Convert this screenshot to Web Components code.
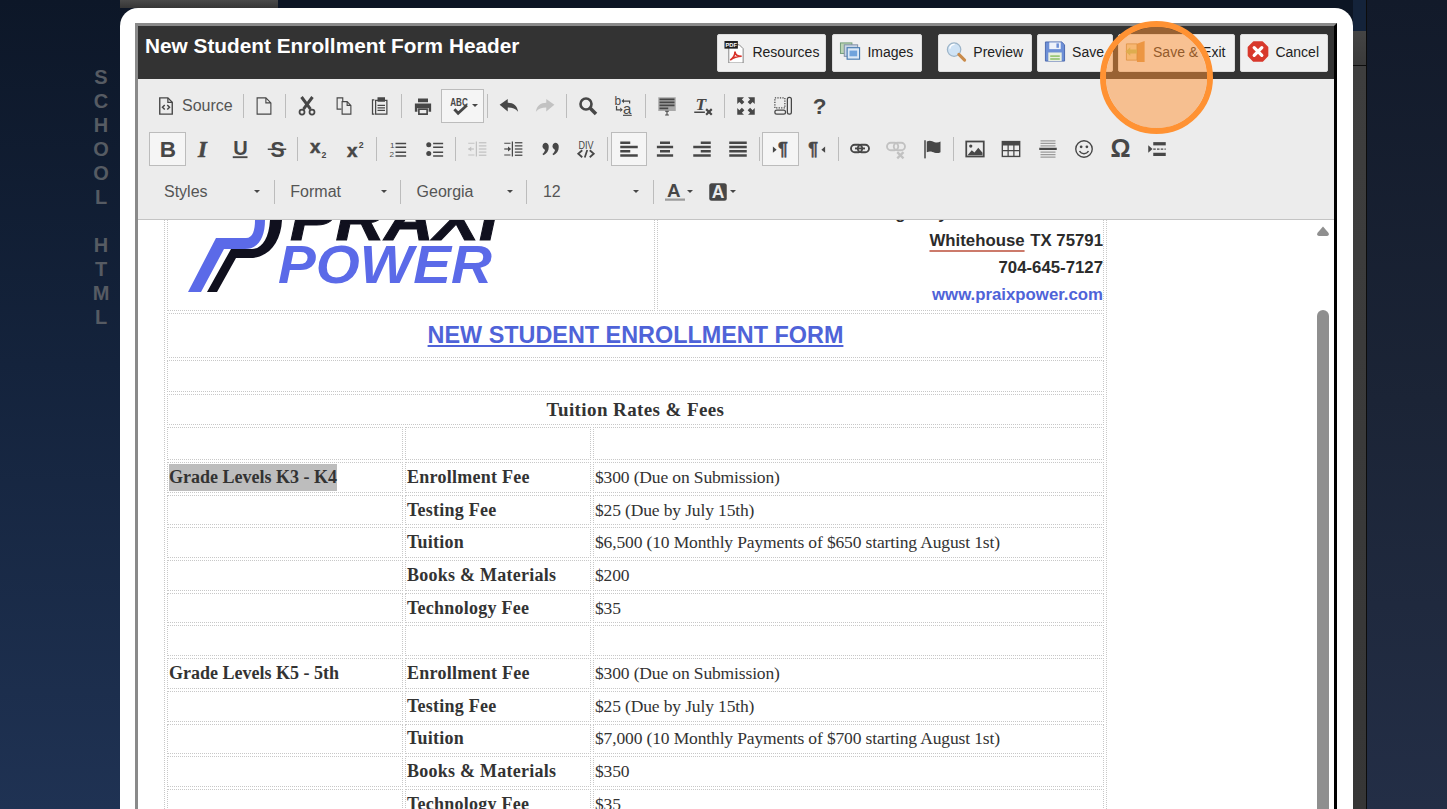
<!DOCTYPE html>
<html>
<head>
<meta charset="utf-8">
<title>New Student Enrollment Form Header</title>
<style>
    html, body { margin: 0; height: 100%; overflow: hidden; background: #141c2e; }
</style>
</head>
<body>
<page-backdrop rail="SCHOOL HTML"></page-backdrop>
<editor-modal>
    <editor-header title="New Student Enrollment Form Header">
        <action-button icon="pdf" style="margin-right:1px;padding-right:6px">Resources</action-button>
        <action-button icon="images">Images</action-button>
        <action-button icon="preview" style="margin-left:11px">Preview</action-button>
        <action-button icon="save">Save</action-button>
        <action-button icon="exit" style="padding-right:9px">Save &amp; Exit</action-button>
        <action-button icon="cancel">Cancel</action-button>
    </editor-header>
    <cke-toolbar>
        <tool-row loose>
            <tool-button icon="source" label="Source"></tool-button><tool-sep></tool-sep>
            <tool-button icon="newpage"></tool-button><tool-sep></tool-sep>
            <tool-button icon="cut"></tool-button><tool-button icon="copy"></tool-button><tool-button icon="paste"></tool-button><tool-sep></tool-sep>
            <tool-button icon="print"></tool-button><tool-button icon="spell" arrow active></tool-button><tool-sep></tool-sep>
            <tool-button icon="undo"></tool-button><tool-button icon="redo"></tool-button><tool-sep></tool-sep>
            <tool-button icon="find"></tool-button><tool-button icon="replace"></tool-button><tool-sep></tool-sep>
            <tool-button icon="selectall"></tool-button><tool-button icon="clear"></tool-button><tool-sep></tool-sep>
            <tool-button icon="maximize"></tool-button><tool-button icon="blocks"></tool-button><tool-button icon="help"></tool-button>
        </tool-row>
        <tool-row>
            <tool-button icon="bold" active></tool-button><tool-button icon="italic"></tool-button><tool-button icon="underline"></tool-button><tool-button icon="strike"></tool-button><tool-sep></tool-sep>
            <tool-button icon="sub"></tool-button><tool-button icon="sup"></tool-button><tool-sep></tool-sep>
            <tool-button icon="ol"></tool-button><tool-button icon="ul"></tool-button><tool-sep></tool-sep>
            <tool-button icon="outdent"></tool-button><tool-button icon="indent"></tool-button><tool-button icon="quote"></tool-button><tool-button icon="div"></tool-button><tool-sep></tool-sep>
            <tool-button icon="left" active></tool-button><tool-button icon="center"></tool-button><tool-button icon="right"></tool-button><tool-button icon="justify"></tool-button><tool-sep></tool-sep>
            <tool-button icon="ltr" active></tool-button><tool-button icon="rtl"></tool-button><tool-sep></tool-sep>
            <tool-button icon="link"></tool-button><tool-button icon="unlink"></tool-button><tool-button icon="flag"></tool-button><tool-sep></tool-sep>
            <tool-button icon="image"></tool-button><tool-button icon="table"></tool-button><tool-button icon="hr"></tool-button><tool-button icon="smiley"></tool-button><tool-button icon="omega"></tool-button><tool-button icon="pagebreak"></tool-button>
        </tool-row>
        <tool-row combos>
            <tool-combo>Styles</tool-combo><tool-sep flush></tool-sep>
            <tool-combo>Format</tool-combo><tool-sep flush></tool-sep>
            <tool-combo>Georgia</tool-combo><tool-sep flush></tool-sep>
            <tool-combo>12</tool-combo><tool-sep flush></tool-sep>
            <tool-button icon="textcolor" arrow style="margin-left:3.5px"></tool-button><tool-button icon="bgcolor" arrow></tool-button>
        </tool-row>
    </cke-toolbar>
    <doc-sheet></doc-sheet>
</editor-modal>
<cue-ring></cue-ring>

<script>
// Toolbar glyphs, drawn on a 16 unit grid
const line = (d, w = 1) => `<path d="${d}" fill="none" stroke="currentColor" stroke-width="${w}"/>`;
const fill = (d) => `<path d="${d}" fill="currentColor"/>`;
const label = (x, y, size, text, extra = '') =>
    `<text x="${x}" y="${y}" font-size="${size}" ${extra} font-family="'Liberation Sans',sans-serif" font-weight="700" fill="currentColor">${text}</text>`;
const bars = (rows) => rows.map(([x, y, w, h = 1.6]) => `<rect x="${x}" y="${y}" width="${w}" height="${h}" fill="currentColor"/>`).join('');
const heavy = 'stroke="currentColor" stroke-width=".4"';

const TOOL_ICONS = {
    source: line('M3 1.5h6.5L13 5v9.5H3z', 1.1) + line('M9.5 1.5V5H13', 1) + line('M7 7.2L5.2 9 7 10.8M9 7.2l1.8 1.8L9 10.8', 1.2),
    newpage: line('M2.5 1.5h7l4 4v9h-11zM9.5 1.5v4h4', .9),
    cut: line('M5.2 10.5L12.4 .8M10.8 10.5L3.6 .8', 2.4) + '<circle cx="4" cy="12.8" r="2" fill="none" stroke="currentColor" stroke-width="1.4"/><circle cx="12" cy="12.8" r="2" fill="none" stroke="currentColor" stroke-width="1.4"/>',
    copy: line('M6 10.5H2.5v-9H7v3', .9) + line('M6.5 4.5H10.5l3 3v7h-7zM10.5 4.5v3h3', .9),
    paste: line('M3.5 3H2v11.5h1.5', 1) + line('M4.5 3.5h9v11h-9z', 1) + fill('M6 1h6v3.6H6z') + bars([[6, 7, 6, 1], [6, 9, 6, 1], [6, 11, 6, 1]]),
    print: fill('M4 2h8v3H4zM1.5 6h13v6.5H12.5V9.5h-9v3H1.5z') + line('M4.7 10.5h6.6v4H4.7z', 1.3),
    spell: label(.2, 7.6, 8.4, 'ABC', 'textLength="14" lengthAdjust="spacingAndGlyphs"') + line('M3.5 10.6l3 3.2 7-6.4', 2.3),
    undo: fill('M.5 7L7 2.3v3c4.5 0 7.6 2.4 8.3 7.2-2-2.5-4.6-3.4-8.3-3.4v3.2z'),
    redo: fill('M15.5 7L9 2.3v3c-4.5 0-7.6 2.4-8.3 7.2 2-2.5 4.6-3.4 8.3-3.4v3.2z'),
    find: '<circle cx="6.4" cy="6.4" r="4.4" fill="none" stroke="currentColor" stroke-width="2.1"/>' + line('M9.8 9.8l4.6 4.6', 2.8),
    replace: label(.4, 7.4, 9.5, 'b', 'style="font-weight:400"') + label(7.2, 14.4, 12, 'a', 'style="font-weight:400"') + line('M8 4h4.5V6', 1) + fill('M8 2.2v3.6L6 4z') + line('M2 8v3h3', 1) + fill('M5 9.2v3.6L7 11z') + bars([[7.2, 15, 7, .9]]),
    selectall: '<rect x="1" y="1" width="14" height="11" fill="#a8a8a8"/>' + bars([[2, 2, 12, 1.4], [2, 4.4, 12, 1.4], [2, 6.8, 12, 1.4], [2, 9.2, 7, 1.4]]) + line('M6.5 12.2h3M8 12.2v3M6.5 15.2h3', .9),
    clear: `<text x="2" y="11" font-size="14" font-family="'Liberation Serif',serif" font-weight="700" font-style="italic" fill="currentColor">T</text>` + bars([[1, 12.4, 8.5, 1.2]]) + line('M10.5 10.5l4.5 4.5M15 10.5l-4.5 4.5', 1.7),
    maximize: fill('M1 1h5.4L4.7 2.7l2 2-2 2-2-2L1 6.4zM15 1v5.4l-1.7-1.7-2 2-2-2 2-2L9.6 1zM1 15V9.6l1.7 1.7 2-2 2 2-2 2L6.4 15zM15 15H9.6l1.7-1.7-2-2 2-2 2 2L15 9.6z'),
    blocks: '<path d="M1.5 1.5h8v8h-8z" fill="none" stroke="currentColor" stroke-width="1" stroke-dasharray="1 1"/><rect x="1.5" y="11.3" width="8.5" height="3.2" rx="1.5" fill="none" stroke="currentColor"/><rect x="11.5" y="1" width="3.2" height="13.5" rx="1.5" fill="none" stroke="currentColor"/>',
    help: label(3, 14.6, 18, '?'),
    bold: label(2.2, 14, 18, 'B'),
    italic: `<text x="3.2" y="14" font-size="18" font-family="'Liberation Serif',serif" font-weight="700" font-style="italic" fill="currentColor" stroke="currentColor" stroke-width=".5">I</text>`,
    underline: label(2.6, 12.4, 16, 'U') + bars([[2.2, 13.8, 11.8, 1.5]]),
    strike: label(2.8, 14, 17, 'S') + bars([[.6, 7.6, 14.8, 1.2]]),
    sub: label(.8, 11.4, 15, 'x', heavy) + label(10, 14.8, 7, '2'),
    sup: label(.8, 14, 15, 'x', heavy) + label(10.2, 7, 7, '2'),
    ol: label(1.6, 7, 6.5, '1', 'style="font-weight:400"') + label(1.2, 14, 6.5, '2', 'style="font-weight:400"') + bars([[6, 3, 8.5, 1.2], [6, 6, 8.5, 1.2], [6, 10, 8.5, 1.2], [6, 13, 8.5, 1.2]]),
    ul: '<circle cx="3" cy="4.6" r="2" fill="currentColor"/><circle cx="3" cy="11.6" r="2" fill="currentColor"/>' + bars([[6.5, 3, 8, 1.2], [6.5, 6, 8, 1.2], [6.5, 10, 8, 1.2], [6.5, 13, 8, 1.2]]),
    outdent: bars([[7, 2, 1, 12], [9.5, 2.5, 6, 1], [9.5, 5, 6, 1], [9.5, 7.5, 6, 1], [9.5, 10, 6, 1], [9.5, 12.5, 6, 1]]) + line('M1 8H5.5', 1) + fill('M1 8l2.4-2v4zM1 3h5v.8H1zM1 12.3h5v.8H1z'),
    indent: bars([[7, 2, 1, 12], [9.5, 2.5, 6, 1], [9.5, 5, 6, 1], [9.5, 7.5, 6, 1], [9.5, 10, 6, 1], [9.5, 12.5, 6, 1]]) + line('M1 8H5', 1) + fill('M6.5 8L4 6v4zM1 3h5v.8H1zM1 12.3h5v.8H1z'),
    quote: fill('M4 3a3.2 3.2 0 0 1 3 3.3c0 3-1.6 5.2-4.2 6.7l-.9-1c1.2-1 2-2.2 2.1-3.3A3 3 0 0 1 4 3zM12 3a3.2 3.2 0 0 1 3 3.3c0 3-1.6 5.2-4.2 6.7l-.9-1c1.2-1 2-2.2 2.1-3.3A3 3 0 0 1 12 3z'),
    div: label(2, 7.6, 8.6, 'DIV', 'style="font-weight:400" textLength="12" lengthAdjust="spacingAndGlyphs"') + line('M5 9l-3.2 2.8L5 14.6M11 9l3.2 2.8L11 14.6M9 8.8l-2 6', 1.4),
    left: bars([[1, 2, 8, 2], [1, 5.4, 14, 2], [1, 8.8, 8, 2], [1, 12.2, 14, 2]]),
    center: bars([[4, 2, 8, 2], [1.5, 5.4, 13, 2], [4, 8.8, 8, 2], [1.5, 12.2, 13, 2]]),
    right: bars([[7, 2, 8, 2], [1, 5.4, 14, 2], [7, 8.8, 8, 2], [1, 12.2, 14, 2]]),
    justify: bars([[1, 2, 14, 2], [1, 5.4, 14, 2], [1, 8.8, 14, 2], [1, 12.2, 14, 2]]),
    ltr: fill('M1.5 6l3 2.5-3 2.5z') + label(5.5, 13, 14, '¶', heavy),
    rtl: label(1, 13, 14, '¶', heavy) + fill('M14.5 6l-3 2.5 3 2.5z'),
    link: '<rect x=".8" y="4.6" width="9" height="6" rx="3" fill="none" stroke="currentColor" stroke-width="1.5"/><rect x="6.2" y="4.6" width="9" height="6" rx="3" fill="none" stroke="currentColor" stroke-width="1.5"/>' + bars([[4, 6.8, 8, 1.5]]),
    unlink: '<rect x=".8" y="3" width="9" height="6" rx="3" fill="none" stroke="currentColor" stroke-width="1.5"/><rect x="6.2" y="3" width="9" height="6" rx="3" fill="none" stroke="currentColor" stroke-width="1.5"/>' + line('M9 10.5l5 5M14 10.5l-5 5', 1.8),
    flag: bars([[1, 1, 1.2, 14.5]]) + fill('M3 2c3-1.2 4.4 0 6.3.5 2 .4 3.2.2 4.7-.5v8.6c-1.6.8-3 .8-4.7.4-1.8-.6-3.5-1.5-6.3-.4z'),
    image: '<rect x="1" y="2" width="14" height="12" fill="none" stroke="currentColor" stroke-width="1.4"/><circle cx="4.6" cy="5.6" r="1.3" fill="currentColor"/>' + fill('M2 13l3.4-4 2.2 1.8L10.6 7 14 11v2z'),
    table: fill('M.5 1.5h15v13H.5z') + '<g fill="#ececec"><rect x="1.6" y="5.2" width="3.6" height="3.6"/><rect x="6.2" y="5.2" width="3.6" height="3.6"/><rect x="10.8" y="5.2" width="3.6" height="3.6"/><rect x="1.6" y="9.8" width="3.6" height="3.6"/><rect x="6.2" y="9.8" width="3.6" height="3.6"/><rect x="10.8" y="9.8" width="3.6" height="3.6"/></g>',
    hr: '<g fill="#9a9a9a"><rect x="2" y="1" width="12" height="1"/><rect x="2" y="3" width="12" height="1"/><rect x="2" y="5" width="12" height="1"/><rect x="2" y="10" width="12" height="1"/><rect x="2" y="12" width="12" height="1"/><rect x="2" y="14" width="12" height="1"/></g>' + bars([[1, 7, 14, 1.8]]),
    smiley: '<circle cx="8" cy="8" r="6.6" fill="none" stroke="currentColor" stroke-width="1.1"/><circle cx="5.7" cy="6.2" r="1.1" fill="currentColor"/><circle cx="10.3" cy="6.2" r="1.1" fill="currentColor"/>' + line('M4.4 9.6c1.6 2.8 5.6 2.8 7.2 0', 1.2),
    omega: label(-.4, 14.6, 20, 'Ω'),
    pagebreak: fill('M1 5l3.4 3L1 11z') + bars([[5, 2.5, 10, 2.6], [5, 11, 10, 2.6]]) + '<path d="M5 8h10" stroke="currentColor" stroke-width="1" stroke-dasharray="2 1"/>',
    textcolor: label(1.5, 11.6, 15, 'A') + '<rect x="0" y="13.2" width="16" height="1.8" fill="#9c9c9c"/>',
    bgcolor: '<rect x="1" y="1" width="14" height="14" rx="2" fill="currentColor"/>' + `<text x="3" y="13" font-size="14" font-family="'Liberation Sans',sans-serif" font-weight="700" fill="#ececec">A</text>`
};

// The coloured icons of the dark header bar, on a 22 unit grid
const ACTION_ICONS = {
    pdf: `<path d="M4.5 4h11l4 4v15h-15z" fill="#fff" stroke="#666" stroke-width=".8"/><rect x="0" y="0" width="14" height="8" fill="#222"/><text x="1" y="6.4" font-size="6.4" font-weight="700" font-family="'Liberation Sans',sans-serif" fill="#fff" textLength="12" lengthAdjust="spacingAndGlyphs">PDF</text><path d="M6 20c3-2 5-6 5-9 0 3 2 5 7 5-4 0-8 1-12 4z" fill="none" stroke="#d8322a" stroke-width="1.7"/>`,
    images: `<rect x="1" y="2" width="12" height="11" fill="#bcd4b4" stroke="#6f9a78"/><rect x="5" y="4" width="14" height="12" fill="#c9d6e6" stroke="#7f8ea6"/><rect x="8" y="7" width="13" height="12" fill="#dce9f6" stroke="#4a7cb0" stroke-width="1.2"/><rect x="10.5" y="10" width="8" height="6" fill="#6fa3dc"/>`,
    preview: `<circle cx="9" cy="9" r="7" fill="#cfe3f5" stroke="#9cb4c8" stroke-width="1.3"/><path d="M4.5 8a5 5 0 0 1 5-4.4" fill="none" stroke="#fff" stroke-width="1.4"/><path d="M14 14l6 6" stroke="#c98b4a" stroke-width="3.2" stroke-linecap="round"/>`,
    save: `<path d="M1 1h17l3 3v17H1z" fill="#6d8fd6" stroke="#4a68ad"/><rect x="5" y="1.5" width="12" height="7" fill="#eef2fa"/><rect x="12.5" y="2.5" width="2.6" height="4.6" fill="#6d8fd6"/><rect x="4" y="12" width="14" height="9" fill="#e8f0e0"/><rect x="6" y="15" width="10" height="1.6" fill="#8ec06a"/><rect x="6" y="18" width="10" height="1.6" fill="#8ec06a"/>`,
    exit: `<path d="M12 3l8-3v22h-8z" fill="#d89a50"/><path d="M12 3H1v17h11z" fill="#efdcae" stroke="#b98c4a" stroke-width=".8"/><path d="M0 11l5-4.5V9h7v4H5v2.5z" fill="#bcc968"/>`,
    cancel: `<path d="M6.5 1h9L21 6.5v9L15.5 21h-9L1 15.5v-9z" fill="#d8392c" stroke-linejoin="round" stroke="#d8392c" stroke-width="1.6"/><path d="M7 7l8 8M15 7l-8 8" stroke="#fff" stroke-width="3.4" stroke-linecap="round"/>`
};

class PageBackdrop extends HTMLElement {
    connectedCallback() {
        const letters = this.getAttribute('rail').split('');
        this.attachShadow({ mode: 'open' }).innerHTML = `
            <style>
                :host {
                    display: grid;
                    grid-template-columns: 120px 158px 1075px 14px 1fr;
                    height: 809px;
                    background: #0d1626;
                }
                .rail {
                    background: linear-gradient(to bottom, #0d1728 0%, #14233c 45%, #1f3253 100%);
                    padding: 65px 0 0 91px;
                    font: 700 20px/24px "Liberation Sans", sans-serif;
                    color: #565b63;
                }
                .rail div { width: 20px; height: 24px; text-align: center; }
                .tab { height: 8px; background: linear-gradient(to bottom, #4a4a4a, #363636); }
                .mid { background: #0c1524; }
                .edge {
                    box-sizing: border-box;
                    border-right: 1px solid #0c0c0c;
                    background: linear-gradient(to bottom, #14233a 0, #14233a 31px, #444 31px, #3a3a3a 65px, #0e0e0e 65px, #0e0e0e 66px, #3e3e3e 66px, #363636 100%);
                }
                .far { background: linear-gradient(to bottom, #121a2a 0, #1b2436 400px, #232e46 100%); }
            </style>
            <div class="rail">${letters.map(c => `<div>${c === ' ' ? '' : c}</div>`).join('')}</div>
            <div class="tab"></div>
            <div class="mid"></div>
            <div class="edge"></div>
            <div class="far"></div>
        `;
    }
}

class EditorModal extends HTMLElement {
    connectedCallback() {
        this.attachShadow({ mode: 'open' }).innerHTML = `
            <style>
                :host {
                    display: block;
                    position: absolute;
                    left: 120px;
                    top: 8px;
                    width: 1233px;
                    height: 860px;
                    box-sizing: border-box;
                    padding: 15px 16px 0 15px;
                    background: #fff;
                    border-radius: 18px 18px 0 0;
                }
                .frame {
                    display: flex;
                    flex-direction: column;
                    height: 100%;
                    box-sizing: border-box;
                    border: 3px solid #8a8a8a;
                    border-right-color: #000;
                    border-bottom: 0;
                }
            </style>
            <div class="frame"><slot></slot></div>
        `;
    }
}

class EditorHeader extends HTMLElement {
    connectedCallback() {
        this.attachShadow({ mode: 'open' }).innerHTML = `
            <style>
                :host {
                    display: flex;
                    justify-content: space-between;
                    flex: 0 0 53px;
                    background: #333;
                    padding: 0 6px 0 7px;
                }
                h1 {
                    margin: 8px 0 0;
                    font: 700 20.8px/24px "Liberation Sans", sans-serif;
                    color: #fff;
                }
                .actions { display: flex; gap: 5px; padding-top: 8px; align-items: flex-start; }
            </style>
            <h1>${this.getAttribute('title')}</h1>
            <div class="actions"><slot></slot></div>
        `;
        this.removeAttribute('title');
    }
}

class ActionButton extends HTMLElement {
    connectedCallback() {
        this.attachShadow({ mode: 'open' }).innerHTML = `
            <style>
                :host {
                    display: flex;
                    align-items: center;
                    gap: 6px;
                    height: 38px;
                    box-sizing: border-box;
                    padding: 0 8px 2px 6px;
                    background: #f0f0f0;
                    border: 1px solid #dcdcdc;
                    border-radius: 2px;
                    font: 14px "Liberation Sans", sans-serif;
                    color: #222;
                }
                svg { width: 22px; height: 22px; flex: none; }
            </style>
            <svg viewBox="0 0 22 23">${ACTION_ICONS[this.getAttribute('icon')]}</svg>
            <slot></slot>
        `;
    }
}

class CkeToolbar extends HTMLElement {
    connectedCallback() {
        this.attachShadow({ mode: 'open' }).innerHTML = `
            <style>
                :host {
                    display: flex;
                    flex-direction: column;
                    gap: 9.4px;
                    flex: 0 0 141px;
                    box-sizing: border-box;
                    padding: 10px 0 0 11px;
                    background: #ececec;
                    border-bottom: 1px solid #c4c4c4;
                }
            </style>
            <slot></slot>
        `;
    }
}

class ToolRow extends HTMLElement {
    connectedCallback() {
        this.attachShadow({ mode: 'open' }).innerHTML = `
            <style>
                :host { display: flex; align-items: center; height: 33.6px; }
                :host([combos]) { margin-left: -.5px; }
                :host([loose]) ::slotted(tool-sep) { margin: 0 2.6px; }
            </style>
            <slot></slot>
        `;
    }
}

class ToolButton extends HTMLElement {
    connectedCallback() {
        const name = this.getAttribute('icon');
        const text = this.getAttribute('label');
        const muted = ['redo', 'unlink', 'outdent'].includes(name);
        this.attachShadow({ mode: 'open' }).innerHTML = `
            <style>
                :host {
                    display: flex;
                    align-items: center;
                    justify-content: center;
                    flex: none;
                    width: 36.5px;
                    height: 33.6px;
                    box-sizing: border-box;
                    color: ${muted ? '#c2c2c2' : '#474747'};
                    font: 16px "Liberation Sans", sans-serif;
                }
                :host([active]) { background: #f5f5f5; border: 1px solid #bcbcbc; }
                :host([arrow]) { width: 43px; justify-content: flex-start; padding-left: 8px; }
                :host([label]) { width: 91px; justify-content: flex-start; padding-left: 7px; }
                svg { width: 20px; height: 20px; flex: none; overflow: visible; }
                .txt { margin-left: 6px; color: #555; }
                .caret {
                    margin-left: 2px;
                    border: 3px solid transparent;
                    border-top: 3px solid #474747;
                    border-bottom: 0;
                }
            </style>
            <svg viewBox="0 0 16 16">${TOOL_ICONS[name]}</svg>
            ${text ? `<span class="txt">${text}</span>` : ''}
            ${this.hasAttribute('arrow') ? '<span class="caret"></span>' : ''}
        `;
    }
}

class ToolSep extends HTMLElement {
    connectedCallback() {
        this.attachShadow({ mode: 'open' }).innerHTML = `
            <style>
                :host {
                    display: block;
                    flex: none;
                    width: 1px;
                    height: 24px;
                    margin: 0 2.45px;
                    background: #bcbcbc;
                }
                :host([flush]) { margin: 0; }
            </style>
        `;
    }
}

class ToolCombo extends HTMLElement {
    connectedCallback() {
        this.attachShadow({ mode: 'open' }).innerHTML = `
            <style>
                :host {
                    display: flex;
                    align-items: center;
                    justify-content: space-between;
                    flex: none;
                    width: 125.3px;
                    box-sizing: border-box;
                    padding: 0 13.5px 0 15.5px;
                    font: 16px "Liberation Sans", sans-serif;
                    color: #555;
                }
                .caret { border: 3px solid transparent; border-top: 3px solid #474747; border-bottom: 0; }
            </style>
            <slot></slot><span class="caret"></span>
        `;
    }
}

const FEE_ROWS = [
    ['<span class="picked">Grade Levels K3 - K4</span>', 'Enrollment Fee', '$300 (Due on Submission)'],
    ['', 'Testing Fee', '$25 (Due by July 15th)'],
    ['', 'Tuition', '$6,500 (10 Monthly Payments of $650 starting August 1st)'],
    ['', 'Books &amp; Materials', '$200'],
    ['', 'Technology Fee', '$35'],
    ['', '', ''],
    ['Grade Levels K5 - 5th', 'Enrollment Fee', '$300 (Due on Submission)'],
    ['', 'Testing Fee', '$25 (Due by July 15th)'],
    ['', 'Tuition', '$7,000 (10 Monthly Payments of $700 starting August 1st)'],
    ['', 'Books &amp; Materials', '$350'],
    ['', 'Technology Fee', '$35']
];

class DocSheet extends HTMLElement {
    connectedCallback() {
        const rows = FEE_ROWS.map(([grade, item, amount]) => `
            <tr class="fee">
                <td class="grade">${grade}</td><td class="item">${item}</td><td colspan="2" class="amount">${amount}</td>
            </tr>`).join('');
        this.attachShadow({ mode: 'open' }).innerHTML = `
            <style>
                :host {
                    display: flex;
                    flex: 1;
                    min-height: 0;
                    overflow: hidden;
                    background: #fff;
                }
                .page { flex: 1; min-width: 0; overflow: hidden; padding-left: 26px; }
                table {
                    width: 943px;
                    margin-top: -74px;
                    table-layout: fixed;
                    border-collapse: separate;
                    border-spacing: 2px;
                    border: 1px dotted #c8c8c8;
                    font: 17.5px "Liberation Serif", serif;
                    color: #333;
                }
                td {
                    border: 1px dotted #c8c8c8;
                    padding: 0 1px;
                    box-sizing: border-box;
                    overflow: hidden;
                    white-space: nowrap;
                }
                .fee td { height: 30.7px; }
                .grade { font-weight: 700; font-size: 18px; }
                .item { font-weight: 700; font-size: 18px; letter-spacing: .25px; }
                .amount { letter-spacing: -.14px; }
                .logo { padding: 0 0 18px 2px; }
                .logo svg { display: block; }
                .addr {
                    vertical-align: bottom;
                    text-align: right;
                    padding: 0 0 2px 0;
                    font: 700 16.8px/27px "Liberation Sans", sans-serif;
                    color: #2b2b2b;
                }
                .addr span { word-spacing: -1.7px; }
                .addr u {
                    text-decoration-color: #cc7a6b;
                    text-decoration-thickness: 2px;
                    text-underline-offset: 4px;
                    margin-right: 1px;
                }
                .addr a { color: #4f63d8; }
                .title {
                    height: 45px;
                    text-align: center;
                    font: 700 23.4px "Liberation Sans", sans-serif;
                    color: #4f63d8;
                    text-decoration: underline;
                }
                .blank { height: 32px; }
                .head { height: 31px; text-align: center; font-weight: 700; font-size: 19px; letter-spacing: .4px; }
                .spacer td { height: 33px; }
                .picked {
                    display: inline-block;
                    line-height: 27px;
                    background: #bdbdbd;
                }
                .bar {
                    flex: 0 0 12px;
                    margin-right: 5px;
                    display: flex;
                    flex-direction: column;
                    padding-top: 6px;
                }
                .up { display: block; width: 12px; height: 10px; flex: none; }
                .thumb { flex: 1; margin-top: 74px; background: #8f8f8f; border-radius: 6px 6px 0 0; }
            </style>
            <div class="page">
                <table>
                    <colgroup><col style="width:236px"><col style="width:186px"><col style="width:62px"><col></colgroup>
                    <tr>
                        <td class="logo" colspan="3">
                            <svg width="340" height="142" viewBox="170 150 340 142">
                                <path d="M188 292L216 238H246C253 238 255 230 255 220H265C265 238 258 249 245 249H224L201 292Z" fill="#5b6ae8"/>
                                <path d="M207 292L231 249H252C262 249 269 238 270 220H282C281 243 268 258 250 258H236L217 292Z" fill="#10101e"/>
                                <text x="290" y="240" font-family="Liberation Sans" font-weight="700" font-style="italic" font-size="62" fill="#10101e" stroke="#10101e" stroke-width="1" textLength="208" lengthAdjust="spacingAndGlyphs">PRAXI</text>
                                <text x="278" y="283" font-family="Liberation Sans" font-weight="700" font-style="italic" font-size="53" fill="#5b6ae8" textLength="214" lengthAdjust="spacingAndGlyphs">POWER</text>
                            </svg>
                        </td>
                        <td class="addr"><span>Highway 110 South Suite 100</span><br><u>Whitehouse</u> TX 75791<br>704-645-7127<br><a>www.praixpower.com</a></td>
                    </tr>
                    <tr><td class="title" colspan="4">NEW STUDENT ENROLLMENT FORM</td></tr>
                    <tr><td class="blank" colspan="4"></td></tr>
                    <tr><td class="head" colspan="4">Tuition Rates &amp; Fees</td></tr>
                    <tr class="spacer"><td></td><td></td><td colspan="2"></td></tr>
                    ${rows}
                </table>
            </div>
            <div class="bar">
                <svg class="up" viewBox="0 0 12 10"><path d="M6 .5L11.6 7Q12.4 10 10 10H2Q-.4 10 .4 7Z" fill="#8f8f8f"/></svg>
                <div class="thumb"></div>
            </div>
        `;
    }
}

class CueRing extends HTMLElement {
    connectedCallback() {
        this.attachShadow({ mode: 'open' }).innerHTML = `
            <style>
                :host {
                    display: block;
                    position: absolute;
                    left: 1100px;
                    top: 21px;
                    width: 113px;
                    height: 113px;
                    box-sizing: border-box;
                    border: 6px solid #ff9233;
                    border-radius: 50%;
                    background: rgba(255, 146, 51, .5);
                    background-clip: padding-box;
                }
            </style>
        `;
    }
}

customElements.define('page-backdrop', PageBackdrop);
customElements.define('editor-modal', EditorModal);
customElements.define('editor-header', EditorHeader);
customElements.define('action-button', ActionButton);
customElements.define('cke-toolbar', CkeToolbar);
customElements.define('tool-row', ToolRow);
customElements.define('tool-button', ToolButton);
customElements.define('tool-sep', ToolSep);
customElements.define('tool-combo', ToolCombo);
customElements.define('doc-sheet', DocSheet);
customElements.define('cue-ring', CueRing);
</script>
</body>
</html>
